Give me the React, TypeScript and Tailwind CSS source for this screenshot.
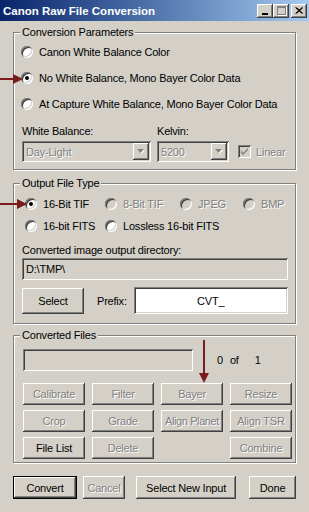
import React from 'react';

const raised =
  'bg-[#d4d0c8] shadow-[inset_-1px_-1px_#404040,inset_1px_1px_#ffffff,inset_-2px_-2px_#808080,inset_2px_2px_#d4d0c8]';
const sunken =
  'shadow-[inset_1px_1px_#808080,inset_-1px_-1px_#ffffff,inset_2px_2px_#404040,inset_-2px_-2px_#d4d0c8]';
const dim = 'text-[#808080] [text-shadow:1px_1px_0_#ffffff]';

const Radio: React.FC<{ label: string; checked?: boolean; disabled?: boolean; className?: string }> = ({
  label,
  checked,
  disabled,
  className = '',
}) => (
  <div className={`flex items-center ${className}`}>
    <span
      className={`flex items-center justify-center w-[12px] h-[12px] shrink-0 rounded-full ${
        disabled ? 'bg-[#d4d0c8]' : 'bg-white'
      } ${sunken}`}
    >
      {checked && <span className="w-[4px] h-[4px] rounded-full bg-black" />}
    </span>
    <span className={`ml-[6px] whitespace-nowrap ${disabled ? dim : 'text-black'}`}>{label}</span>
  </div>
);

const Group: React.FC<{ title: string; className?: string; children: React.ReactNode }> = ({
  title,
  className = '',
  children,
}) => (
  <div className={`relative border border-[#808080] shadow-[inset_1px_1px_#ffffff,1px_1px_#ffffff] ${className}`}>
    <span className="absolute left-[6px] top-[-8px] bg-[#d4d0c8] px-[2px] leading-[15px]">{title}</span>
    {children}
  </div>
);

const Btn: React.FC<{ label: string; disabled?: boolean; className?: string }> = ({ label, disabled, className = '' }) => (
  <div className={`flex items-center justify-center whitespace-nowrap ${raised} ${disabled ? dim : 'text-black'} ${className}`}>
    {label}
  </div>
);

const Combo: React.FC<{ value: string; className?: string }> = ({ value, className = '' }) => (
  <div className={`flex items-center h-[21px] pl-[4px] pr-[2px] bg-[#d4d0c8] ${sunken} ${className}`}>
    <span className={`flex-1 ${dim}`}>{value}</span>
    <span className={`flex items-center justify-center w-[16px] h-[17px] ${raised}`}>
      <svg width="8" height="5" viewBox="0 0 8 5">
        <polygon points="1,1 8,1 4.5,5" fill="#ffffff" />
        <polygon points="0,0 7,0 3.5,4" fill="#808080" />
      </svg>
    </span>
  </div>
);

const TitleButton: React.FC<{ children: React.ReactNode; className?: string }> = ({ children, className = '' }) => (
  <div className={`flex items-center justify-center w-[16px] h-[14px] ${raised} ${className}`}>{children}</div>
);

export default function App() {
  return (
    <div className="relative w-[309px] h-[512px] overflow-hidden bg-[#d4d0c8] text-[11px] leading-[14px] tracking-[-0.2px] text-black font-['Liberation_Sans',Arial,sans-serif]">
      {/* title bar */}
      <div className="flex items-center h-[21px] pl-[3px] pr-[2px] bg-linear-to-r from-[#0a246a] to-[#a6caf0]">
        <span className="text-white font-bold text-[11.5px] tracking-normal">Canon Raw File Conversion</span>
        <div className="ml-auto flex items-center">
          <TitleButton>
            <span className="mt-[6px] w-[6px] h-[2px] bg-black" />
          </TitleButton>
          <TitleButton>
            <span className="w-[9px] h-[9px] border border-t-2 border-[#808080] shadow-[1px_1px_#ffffff]" />
          </TitleButton>
          <TitleButton className="ml-[2px]">
            <svg width="8" height="7" viewBox="0 0 8 7">
              <path d="M0.5 0.5 L7 6.5 M1.5 0.5 L8 6.5 M7 0.5 L0.5 6.5 M8 0.5 L1.5 6.5" stroke="#000" strokeWidth="1" />
            </svg>
          </TitleButton>
        </div>
      </div>

      <div className="px-[13px]">
        {/* Conversion Parameters */}
        <Group title="Conversion Parameters" className="mt-[11px] h-[138px] pt-[6px]">
          <div className="pl-[7px]">
            <Radio className="h-[26px]" label="Canon White Balance Color" />
            <Radio className="h-[26px]" label="No White Balance, Mono Bayer Color Data" checked />
            <Radio className="h-[26px]" label="At Capture White Balance, Mono Bayer Color Data" />
          </div>
          <div className="pl-[8px] mt-[7px] flex">
            <div className="w-[135px]">White Balance:</div>
            <div>Kelvin:</div>
          </div>
          <div className="pl-[8px] mt-[3px] flex items-center">
            <Combo value="Day-Light" className="w-[129px]" />
            <Combo value="5200" className="w-[72px] ml-[6px]" />
            <span className={`ml-[9px] flex items-center justify-center w-[13px] h-[13px] bg-[#d4d0c8] ${sunken}`}>
              <svg width="7" height="7" viewBox="0 0 7 7">
                <path d="M0 2 L0 5 L2 7 L7 2 L7 0 L2 5 Z" fill="#808080" />
              </svg>
            </span>
            <span className={`ml-[5px] ${dim}`}>Linear</span>
          </div>
        </Group>

        {/* Output File Type */}
        <Group title="Output File Type" className="mt-[13px] h-[141px] pt-[9px]">
          <div className="pl-[11px]">
            <div className="flex h-[22px] items-center">
              <Radio className="w-[80px]" label="16-Bit TIF" checked />
              <Radio className="w-[75px]" label="8-Bit TIF" disabled />
              <Radio className="w-[63px]" label="JPEG" disabled />
              <Radio label="BMP" disabled />
            </div>
            <div className="flex h-[22px] items-center">
              <Radio className="w-[80px]" label="16-bit FITS" />
              <Radio label="Lossless 16-bit FITS" />
            </div>
          </div>
          <div className="pl-[8px] mt-[6px]">Converted image output directory:</div>
          <div className={`ml-[8px] mt-[1px] w-[266px] h-[22px] flex items-center pl-[4px] bg-[#d4d0c8] ${sunken}`}>
            D:\TMP\
          </div>
          <div className="pl-[8px] mt-[7px] flex items-center">
            <Btn label="Select" className="w-[62px] h-[26px]" />
            <span className="ml-[13px]">Prefix:</span>
            <div className={`ml-[7px] w-[154px] h-[27px] flex items-center justify-center bg-white ${sunken}`}>CVT_</div>
          </div>
        </Group>

        {/* Converted Files */}
        <Group title="Converted Files" className="mt-[11px] h-[128px] pt-[13px]">
          <div className="pl-[9px] flex items-center">
            <div className={`w-[170px] h-[22px] bg-[#d4d0c8] ${sunken}`} />
            <span className="ml-[24px]">0</span>
            <span className="ml-[7px]">of</span>
            <span className="ml-[16px]">1</span>
          </div>
          <div className="pl-[9px] mt-[12px] grid grid-cols-[62px_62px_62px_62px] gap-x-[7px] gap-y-[5px]">
            <Btn label="Calibrate" disabled className="h-[22px]" />
            <Btn label="Filter" disabled className="h-[22px]" />
            <Btn label="Bayer" disabled className="h-[22px]" />
            <Btn label="Resize" disabled className="h-[22px]" />
            <Btn label="Crop" disabled className="h-[22px]" />
            <Btn label="Grade" disabled className="h-[22px]" />
            <Btn label="Align Planet" disabled className="h-[22px] tracking-[-0.4px]" />
            <Btn label="Align TSR" disabled className="h-[22px]" />
            <Btn label="File List" className="h-[22px]" />
            <Btn label="Delete" disabled className="h-[22px]" />
            <div />
            <Btn label="Combine" disabled className="h-[22px]" />
          </div>
        </Group>

        {/* bottom buttons */}
        <div className="mt-[13px] flex items-center">
          <div className="border border-black">
            <Btn label="Convert" className="w-[62px] h-[21px]" />
          </div>
          <Btn label="Cancel" disabled className="ml-[6px] w-[43px] h-[23px]" />
          <Btn label="Select New Input" className="ml-[11px] w-[103px] h-[23px]" />
          <Btn label="Done" className="ml-[13px] w-[48px] h-[23px]" />
        </div>
      </div>

      {/* annotation arrows */}
      <svg className="absolute inset-0 pointer-events-none" width="309" height="512" viewBox="0 0 309 512">
        <line x1="0" y1="79" x2="16" y2="79" stroke="#7a1c1c" strokeWidth="2" />
        <polygon points="13,74 23,79 13,84" fill="#7a1c1c" />
        <line x1="0" y1="204" x2="20" y2="204" stroke="#7a1c1c" strokeWidth="2" />
        <polygon points="17,199 27,204 17,209" fill="#7a1c1c" />
        <line x1="204" y1="340" x2="204" y2="375" stroke="#7a1c1c" strokeWidth="2" />
        <polygon points="199,373 209,373 204,383" fill="#7a1c1c" />
      </svg>
    </div>
  );
}
